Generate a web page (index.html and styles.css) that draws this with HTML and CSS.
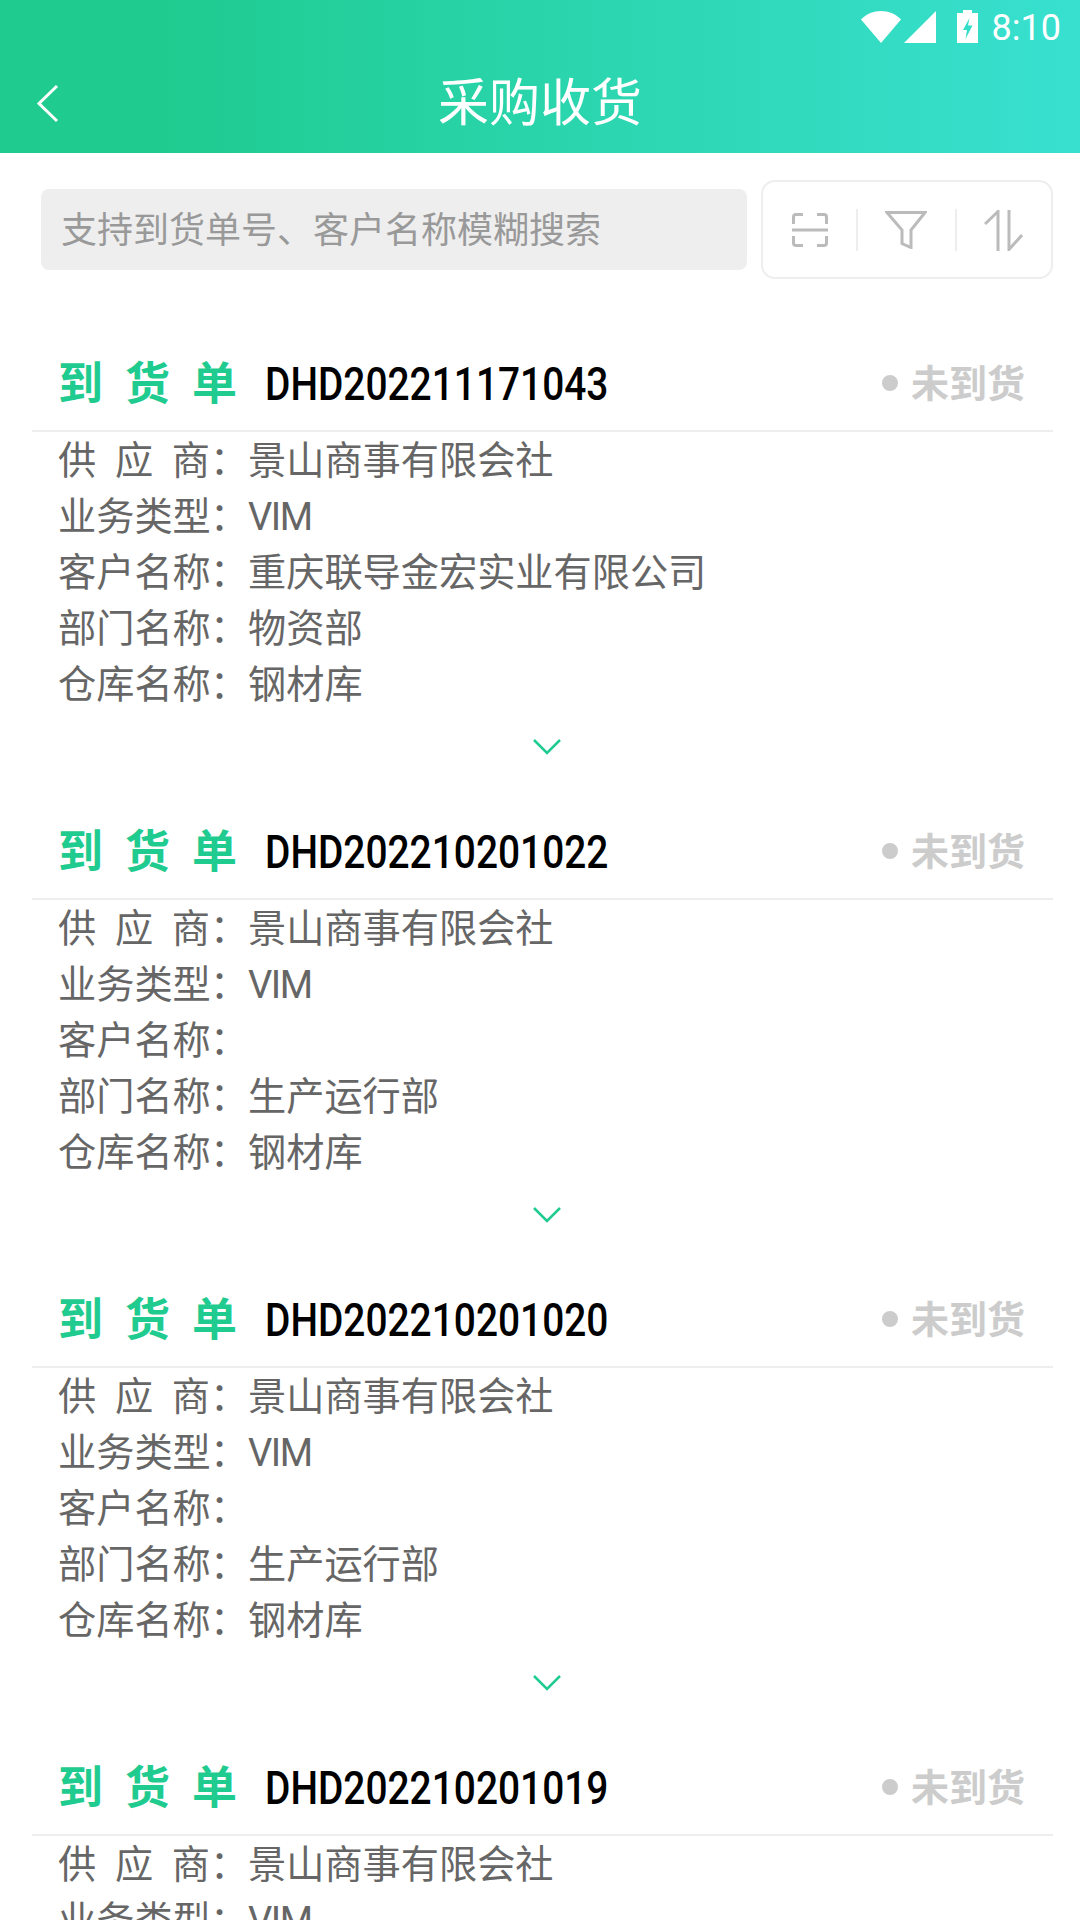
FILE: index.html
```html
<!DOCTYPE html>
<html>
<head>
    <title>采购收货</title>
    <meta charset="UTF-8">
    <link rel="stylesheet" href="styles.css">
</head>

<body>
    <header class="top">
        <div class="status-bar">
            <svg class="icon-wifi" width="40" height="32" viewBox="0 0 40 32"><path d="M0 8.500C11 -2.800 29 -2.800 40 8.500L20 32Z" fill="#fff"/></svg>
            <svg class="icon-cell" width="32" height="32" viewBox="0 0 32 32"><path d="M32 0V32H0Z" fill="#fff"/></svg>
            <svg class="icon-battery" width="21" height="33" viewBox="0 0 21 33"><path fill-rule="evenodd" d="M6 0H15V3H21V33H0V3H6ZM12.500 8L6 20H10L8.500 29L15.500 15.500H11Z" fill="#fff"/></svg>
            <span class="clock">8:10</span>
        </div>
        <div class="nav-bar">
            <svg class="icon-back" width="23" height="39" viewBox="0 0 23 39"><path d="M21 2L3 19.500L21 37" fill="none" stroke="#fff" stroke-width="3"/></svg>
            <h1>采购收货</h1>
        </div>
    </header>

    <div class="search-row">
        <div class="search">支持到货单号、客户名称模糊搜索</div>
        <div class="tools">
            <svg class="tool" width="36" height="34" viewBox="0 0 36 34" fill="none" stroke="#bbb" stroke-width="3"><path d="M1.500 11V4Q1.500 1.500 4 1.500H11M25 1.500H32Q34.500 1.500 34.500 4V11M1.500 23V30Q1.500 32.500 4 32.500H11M25 32.500H32Q34.500 32.500 34.500 30V23M0 17H36"/></svg>
            <i class="tool-sep"></i>
            <svg class="tool" width="42" height="38" viewBox="0 0 42 38" fill="none" stroke="#bbb" stroke-width="3"><path d="M2 1.500H40L26 19V36.500L17 32.500V19Z"/></svg>
            <i class="tool-sep"></i>
            <svg class="tool" width="39" height="41" viewBox="0 0 39 41" fill="none" stroke="#bbb" stroke-width="3"><path d="M1 14L14 1.500V41M25 0V39.500L38 25"/></svg>
        </div>
    </div>

    <div class="list">
        <section class="card">
            <div class="card-head">
                <span class="kind">到货单</span>
                <span class="code">DHD202211171043</span>
                <span class="state">未到货</span>
            </div>
            <div class="row"><span class="label wide">供应商</span><span class="colon">：</span>景山商事有限会社</div>
            <div class="row"><span class="label">业务类型</span><span class="colon">：</span><span class="latin">VIM</span></div>
            <div class="row"><span class="label">客户名称</span><span class="colon">：</span>重庆联导金宏实业有限公司</div>
            <div class="row"><span class="label">部门名称</span><span class="colon">：</span>物资部</div>
            <div class="row"><span class="label">仓库名称</span><span class="colon">：</span>钢材库</div>
            <div class="more"><svg width="28" height="16" viewBox="0 0 28 16"><path d="M1 1L14 14L27 1" fill="none" stroke="#1fcb8f" stroke-width="2.500"/></svg></div>
        </section>

        <section class="card">
            <div class="card-head">
                <span class="kind">到货单</span>
                <span class="code">DHD202210201022</span>
                <span class="state">未到货</span>
            </div>
            <div class="row"><span class="label wide">供应商</span><span class="colon">：</span>景山商事有限会社</div>
            <div class="row"><span class="label">业务类型</span><span class="colon">：</span><span class="latin">VIM</span></div>
            <div class="row"><span class="label">客户名称</span><span class="colon">：</span></div>
            <div class="row"><span class="label">部门名称</span><span class="colon">：</span>生产运行部</div>
            <div class="row"><span class="label">仓库名称</span><span class="colon">：</span>钢材库</div>
            <div class="more"><svg width="28" height="16" viewBox="0 0 28 16"><path d="M1 1L14 14L27 1" fill="none" stroke="#1fcb8f" stroke-width="2.500"/></svg></div>
        </section>

        <section class="card">
            <div class="card-head">
                <span class="kind">到货单</span>
                <span class="code">DHD202210201020</span>
                <span class="state">未到货</span>
            </div>
            <div class="row"><span class="label wide">供应商</span><span class="colon">：</span>景山商事有限会社</div>
            <div class="row"><span class="label">业务类型</span><span class="colon">：</span><span class="latin">VIM</span></div>
            <div class="row"><span class="label">客户名称</span><span class="colon">：</span></div>
            <div class="row"><span class="label">部门名称</span><span class="colon">：</span>生产运行部</div>
            <div class="row"><span class="label">仓库名称</span><span class="colon">：</span>钢材库</div>
            <div class="more"><svg width="28" height="16" viewBox="0 0 28 16"><path d="M1 1L14 14L27 1" fill="none" stroke="#1fcb8f" stroke-width="2.500"/></svg></div>
        </section>

        <section class="card">
            <div class="card-head">
                <span class="kind">到货单</span>
                <span class="code">DHD202210201019</span>
                <span class="state">未到货</span>
            </div>
            <div class="row"><span class="label wide">供应商</span><span class="colon">：</span>景山商事有限会社</div>
            <div class="row"><span class="label">业务类型</span><span class="colon">：</span><span class="latin">VIM</span></div>
        </section>
    </div>
</body>
</html>
```

FILE: styles.css
```css
html, body { margin: 0; padding: 0; height: 1920px; overflow: hidden; background: #fff; }
body { font-family: "Noto Sans CJK SC", "Noto Sans", sans-serif; color: #666; }

.top { height: 153px; background: linear-gradient(90deg, #1fcb8f 0%, #1fcb8f 15%, #2dd7b3 60%, #38e0d0 100%); color: #fff; }
.status-bar { height: 54px; display: flex; justify-content: flex-end; align-items: flex-start; padding: 10px 19px 0 0; box-sizing: border-box; }
.icon-wifi { margin-top: 1px; }
.icon-cell { margin: 1px 0 0 3px; }
.icon-battery { margin-left: 21px; }
.clock { margin-left: 14px; font: 36px/34px Roboto, sans-serif; margin-top: 1px; }
.nav-bar { height: 99px; display: grid; grid-template-columns: 1fr auto 1fr; align-items: center; }
.nav-bar h1 { grid-column: 2; grid-row: 1; margin: 0 0 9px; font-size: 51px; font-weight: 400; line-height: 60px; }
.icon-back { grid-column: 1; grid-row: 1; margin: 0 0 0 36px; }

.search-row { height: 182px; box-sizing: border-box; padding: 27px 27px 0 41px; display: flex; gap: 14px; align-items: flex-start; }
.search { flex: 1; height: 81px; margin-top: 9px; box-sizing: border-box; padding-left: 20px; background: #eee; border-radius: 8px; color: #999; font-size: 36px; line-height: 76px; }
.tools { width: 292px; height: 99px; box-sizing: border-box; border: 2px solid #eee; border-radius: 14px; display: flex; align-items: center; justify-content: space-between; padding: 0 28px 0 29px; }
.tool { margin-top: 1px; }
.tool-sep { width: 2px; height: 42px; background: #eee; }

.card { height: 468px; }
.card-head { height: 97px; box-sizing: border-box; margin: 0 27px 0 32px; padding: 0 28px 0 26px; border-bottom: 2px solid #eee; display: flex; align-items: center; }
.kind { width: 207px; margin-bottom: 4px; color: #1fcb8f; font-size: 45px; font-weight: 700; letter-spacing: 22px; white-space: nowrap; }
.code { width: 342px; color: #000; font: 500 46px/54px Roboto, sans-serif; white-space: nowrap; transform: scaleX(.845); transform-origin: left center; margin-top: 2px; }
.state { margin-left: auto; margin-bottom: 4px; display: flex; align-items: center; gap: 13px; color: #ccc; font-size: 38px; font-weight: 700; }
.state::before { content: ""; width: 16px; height: 16px; border-radius: 50%; background: #ccc; margin-top: 4px; }

.row { height: 56px; padding-left: 58px; font-size: 38.2px; line-height: 52px; white-space: nowrap; }
.label { display: inline-block; width: 152px; vertical-align: top; }
.label.wide { text-align: justify; text-align-last: justify; }
.colon { display: inline-block; width: 38px; }
.latin { font-family: Roboto, sans-serif; letter-spacing: -1.5px; }
.more { height: 90px; display: flex; justify-content: center; align-items: flex-start; padding: 27px 0 0 14px; box-sizing: border-box; }
```
